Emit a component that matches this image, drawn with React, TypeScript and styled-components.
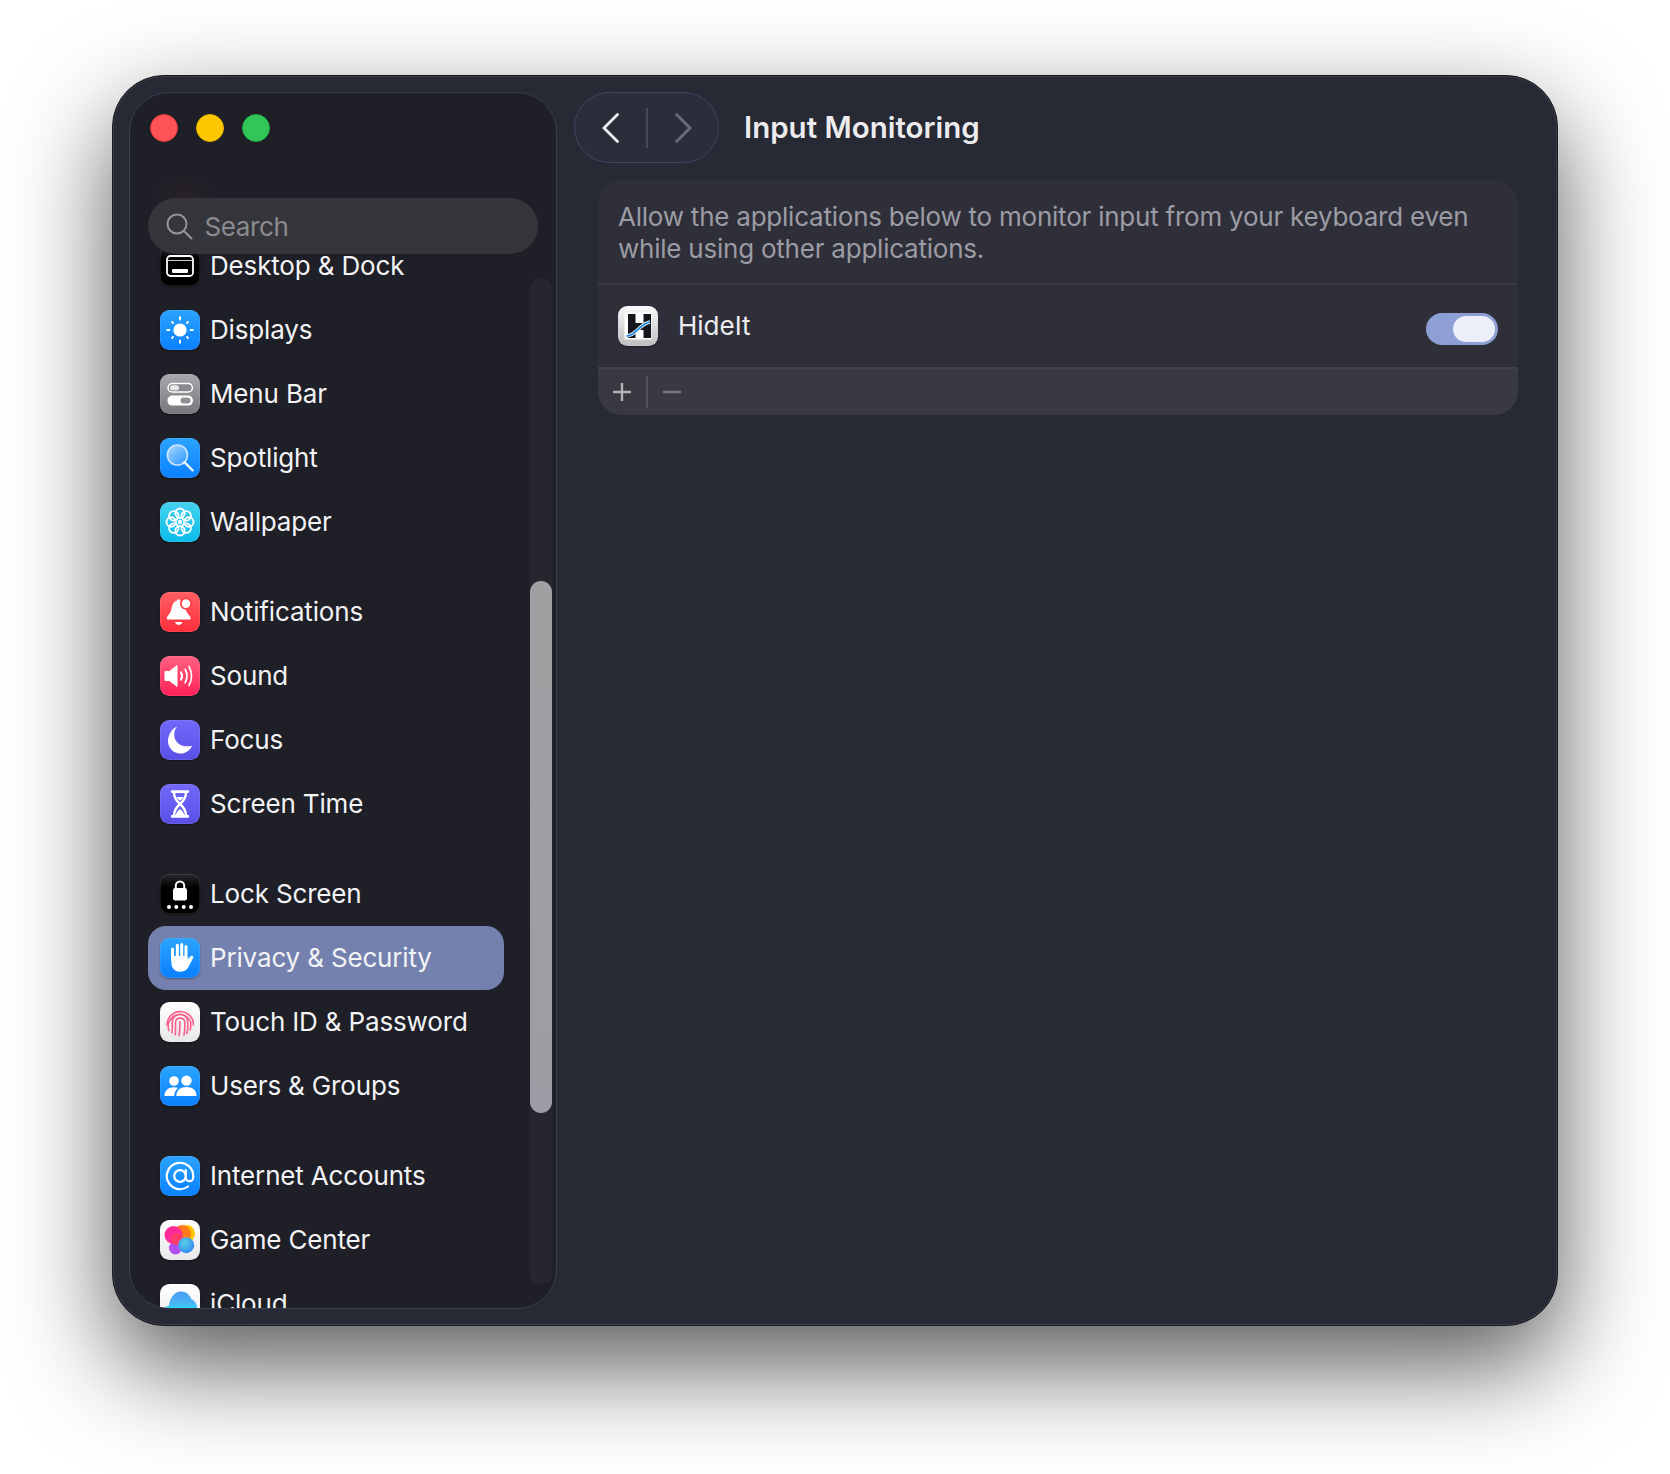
import React from "react";
import styled, { createGlobalStyle } from "styled-components";

const GlobalStyle = createGlobalStyle`
  html, body {
    margin: 0;
    padding: 0;
    background: #fff;
    font-family: "Inter", "Liberation Sans", sans-serif;
    -webkit-font-smoothing: antialiased;
  }
`;

const Page = styled.div`
  width: 1670px;
  height: 1474px;
  padding: 75px 0 0 112px;
  box-sizing: border-box;
  overflow: hidden;
`;

const Window = styled.div`
  box-sizing: border-box;
  width: 1446px;
  height: 1251px;
  display: flex;
  padding: 16px 39px 16px 16px;
  border: 1px solid #17181e;
  border-radius: 52px;
  background: #272934;
  box-shadow: inset 0 0 0 1px rgba(255, 255, 255, 0.1),
    0 40px 100px rgba(0, 0, 0, 0.65);
`;

const Sidebar = styled.aside`
  position: relative;
  box-sizing: border-box;
  flex: none;
  width: 428px;
  height: 1217px;
  border: 1.5px solid #3a3c50;
  border-radius: 40px;
  background: #1e1f27;
  overflow: hidden;
`;

const TrafficLights = styled.div`
  display: flex;
  gap: 18px;
  padding: 21px 0 0 20px;
`;

const Light = styled.span<{ $color: string; $edge: string }>`
  box-sizing: border-box;
  width: 28px;
  height: 28px;
  border-radius: 50%;
  background: ${(p) => p.$color};
  border: 1px solid ${(p) => p.$edge};
`;

const Glow = styled.div`
  position: absolute;
  left: 24px;
  top: 88px;
  width: 60px;
  height: 30px;
  border-radius: 50%;
  background: rgba(255, 70, 90, 0.05);
  filter: blur(12px);
`;

const SearchBox = styled.div`
  position: relative;
  z-index: 2;
  display: flex;
  align-items: center;
  gap: 12px;
  width: 390px;
  height: 56px;
  margin: 56px 0 0 17.5px;
  padding-left: 18px;
  box-sizing: border-box;
  border-radius: 28px;
  background: #35363b;
  color: #8b8b8f;
  font-size: 26px;
  letter-spacing: -0.4px;
  svg {
    flex: none;
  }
`;

const List = styled.div`
  margin: -20px 0 0 17.5px;
  width: 356px;
`;

const Group = styled.div`
  margin-bottom: 26px;
`;

const Row = styled.div<{ $selected?: boolean }>`
  display: flex;
  align-items: center;
  gap: 10.5px;
  height: 64px;
  padding-left: 12px;
  border-radius: 18px;
  background: ${(p) => (p.$selected ? "#7481ae" : "transparent")};
  color: #f3f3f5;
  font-size: 26px;
  letter-spacing: -0.16px;
  white-space: nowrap;
`;

const RowLabel = styled.span`
  padding-bottom: 2px;
`;

const AppIcon = styled.span<{ $bg: string }>`
  flex: none;
  width: 40px;
  height: 40px;
  border-radius: 9.5px;
  background: ${(p) => p.$bg};
  box-shadow: inset 0 0 0 0.5px rgba(255, 255, 255, 0.18),
    0 1px 2px rgba(0, 0, 0, 0.35);
  overflow: hidden;
  svg {
    display: block;
  }
`;

const ScrollTrack = styled.div`
  position: absolute;
  z-index: 1;
  left: 400px;
  top: 185px;
  width: 22px;
  height: 1007px;
  border-radius: 11px;
  background: #26272e;
`;

const ScrollThumb = styled.div`
  position: absolute;
  left: 0;
  top: 303px;
  width: 100%;
  height: 532px;
  border-radius: 11px;
  background: linear-gradient(#a0a0a2, #9c9da4);
`;

const Main = styled.main`
  flex: 1;
  min-width: 0;
  padding-left: 17px;
`;

const Header = styled.header`
  display: flex;
  align-items: center;
  gap: 25px;
  height: 71px;
`;

const NavPill = styled.div`
  box-sizing: border-box;
  display: flex;
  align-items: center;
  justify-content: space-between;
  width: 145px;
  height: 71px;
  padding: 0 26px 0 27px;
  border: 1.5px solid #3f4563;
  border-radius: 36px;
  background: #2b2d3b;
`;

const NavDivider = styled.span`
  width: 1.5px;
  height: 40px;
  background: #474954;
`;

const Title = styled.h1`
  margin: 0;
  padding-bottom: 2px;
  color: #ececee;
  font-size: 29.5px;
  font-weight: 600;
`;

const Card = styled.section`
  margin: 17px 0 0 24px;
  border-radius: 24px;
  background: #2f2f3a;
  overflow: hidden;
`;

const Description = styled.p`
  box-sizing: border-box;
  height: 105px;
  margin: 0;
  padding: 21px 20px 0;
  border-bottom: 2px solid #3a3a45;
  color: #9c9ca4;
  font-size: 26px;
  letter-spacing: -0.23px;
  line-height: 32px;
`;

const AppRow = styled.div`
  display: flex;
  align-items: center;
  gap: 20px;
  height: 82px;
  padding: 0 20px;
  color: #ededf0;
  font-size: 26px;
`;

const AppName = styled.span`
  flex: 1;
  padding-bottom: 2px;
`;

const Toggle = styled.span`
  display: flex;
  align-items: center;
  justify-content: flex-end;
  box-sizing: border-box;
  width: 72px;
  height: 32px;
  margin-top: 6px;
  padding-right: 3px;
  border-radius: 16px;
  background: #8d9fd4;
`;

const Knob = styled.span`
  width: 42px;
  height: 26px;
  border-radius: 13px;
  background: #eceff9;
`;

const Footer = styled.div`
  display: flex;
  align-items: center;
  height: 48px;
  padding-left: 15px;
  border-top: 2px solid #41414b;
  box-sizing: border-box;
  background: #393941;
`;

const FooterDivider = styled.span`
  width: 1.5px;
  height: 32px;
  margin: 0 15px;
  background: #52525a;
`;

const Glyph = ({ children }: { children: React.ReactNode }) => (
  <svg width="40" height="40" viewBox="0 0 40 40">
    {children}
  </svg>
);

const DesktopGlyph = () => (
  <Glyph>
    <rect x="7" y="10" width="26" height="20" rx="3.5" fill="none" stroke="#fff" strokeWidth="1.8" />
    <path d="M7.5 14.5h25" stroke="#fff" strokeWidth="0.8" />
    <rect x="12" y="23" width="16" height="4" rx="1" fill="#fff" />
  </Glyph>
);

const DisplaysGlyph = () => (
  <Glyph>
    <circle cx="20" cy="20" r="6.6" fill="#fff" />
    {[0, 45, 90, 135, 180, 225, 270, 315].map((a) => (
      <rect
        key={a}
        x="19"
        y={a % 90 === 0 ? 6.2 : 7.8}
        width="2"
        height={a % 90 === 0 ? 4.2 : 3.2}
        rx="1"
        fill="#fff"
        transform={`rotate(${a} 20 20)`}
      />
    ))}
  </Glyph>
);

const MenuBarGlyph = () => (
  <Glyph>
    <rect x="8" y="9.4" width="24.4" height="8.6" rx="4.3" fill="#8a8a8e" stroke="#fff" strokeWidth="1.5" />
    <rect x="10" y="11.2" width="9" height="5" rx="2.5" fill="#e9e9ec" />
    <rect x="7.4" y="21.6" width="25.6" height="10" rx="5" fill="#fff" />
    <rect x="20.5" y="23.6" width="10" height="6" rx="3" fill="#8f8f94" />
  </Glyph>
);

const SpotlightGlyph = () => (
  <Glyph>
    <defs>
      <linearGradient id="lens" x1="0" y1="0" x2="1" y2="1">
        <stop offset="0" stopColor="#cfe6ff" stopOpacity="0.85" />
        <stop offset="1" stopColor="#7fbcff" stopOpacity="0.25" />
      </linearGradient>
    </defs>
    <circle cx="17.4" cy="17" r="10" fill="url(#lens)" stroke="#cfe5ff" strokeWidth="1.6" />
    <path d="M24.6 24.4 32.6 32.4" stroke="#eef6ff" strokeWidth="2.3" strokeLinecap="round" />
  </Glyph>
);

const WallpaperGlyph = () => (
  <Glyph>
    {[0, 45, 90, 135, 180, 225, 270, 315].map((a) => (
      <circle key={a} cx="20" cy="11.2" r="4.7" fill="none" stroke="#fff" strokeWidth="1.9" transform={`rotate(${a} 20 20)`} />
    ))}
    <circle cx="20" cy="20" r="2.2" fill="#fff" />
  </Glyph>
);

const NotificationsGlyph = () => (
  <Glyph>
    <path d="M18.600 7.200c.9 0 1.500.6 1.600 1.400 2 .4 3.300 1.500 4.300 3.600.9 3.400 1.100 6.600 3.200 9.400.8 1.100 3 3.200 3 4.600 0 .8-.7 1.300-1.600 1.300H8.300c-.9 0-1.500-.5-1.500-1.300 0-1.400 2-3.500 2.800-4.600 2.800-3.700 1.400-11 7.400-13 .1-.8.7-1.400 1.600-1.400Z" fill="#fff" />
    <path d="M15 30h7.400c-.4 1.800-2 2.900-3.700 2.900S15.400 31.800 15 30Z" fill="#fff" />
    <circle cx="26" cy="11.600" r="5.200" fill="#fff" stroke="#ff4248" strokeWidth="1.800" />
  </Glyph>
);

const SoundGlyph = () => (
  <Glyph>
    <path d="M5 15.500h4.400L17 9.600v20.800l-7.600-5.900H5Z" fill="#fff" stroke="#fff" strokeLinejoin="round" />
    <g fill="none" stroke="#fff" strokeLinecap="round">
      <path d="M21 16.500c1.400 2.300 1.400 4.700 0 7" strokeWidth="2.200" />
      <path d="M25.200 13.400c2.200 4.200 2.200 9 0 13.200" strokeWidth="1.800" />
      <path d="M29 10.500c3.200 6 3.200 13 0 19" strokeWidth="1.600" />
    </g>
  </Glyph>
);

const FocusGlyph = () => (
  <Glyph>
    <path d="M17.200 6.500C13 11 13.200 18.600 17.800 23c3.500 3.300 8.300 4.100 14.200 2.700-1.800 4.600-6.400 7.800-11.600 7.800C13.700 33.500 8 27.900 8 21.200c0-6.500 4-12.700 9.200-14.700Z" fill="#fff" />
  </Glyph>
);

const ScreenTimeGlyph = () => (
  <Glyph>
    <g fill="none" stroke="#fff" strokeLinecap="round">
      <path d="M12.200 7.600h15.600M12.200 32.400h15.600" strokeWidth="2.800" />
      <path d="M14 8c0 6 2.500 9 6 12 3.500 3 6 6 6 12M26 8c0 6-2.500 9-6 12-3.500 3-6 6-6 12" strokeWidth="2.400" />
    </g>
    <path d="M15.800 31c.4-2.800 2.300-4.600 4.200-6 1.900 1.400 3.800 3.200 4.200 6ZM16.500 13h7c-.8 1.500-2 2.600-3.500 3.800-1.500-1.200-2.700-2.300-3.500-3.800Z" fill="#fff" />
  </Glyph>
);

const LockGlyph = () => (
  <Glyph>
    <path d="M15.800 15v-3.400a4.200 4.200 0 0 1 8.400 0V15" fill="none" stroke="#fff" strokeWidth="2" />
    <rect x="13" y="14" width="14" height="12.500" rx="2.200" fill="#fff" />
    {[9, 16.3, 23.7, 31].map((x) => (
      <circle key={x} cx={x} cy="33" r="2" fill="#fff" />
    ))}
  </Glyph>
);

const PrivacyGlyph = () => (
  <Glyph>
    <g stroke="#fff" strokeWidth="3" strokeLinecap="round">
      <path d="M12.500 11v11M17.300 7.200v13M21.700 6.500v13.500M26 8.500v13" />
    </g>
    <path d="M11 18h16.500v4c1.200-2 2.800-4 4-4.200 1.500-.2 2.200.9 1.600 2.100-1.300 2.700-2.800 5.200-4.200 8.100-1.500 3.200-4 5.700-8.500 5.700-5 0-8.900-3-8.900-8.500Z" fill="#fff" />
  </Glyph>
);

const TouchIdGlyph = () => (
  <Glyph>
    <g fill="none" stroke="#fb5f87" strokeWidth="1.600" strokeLinecap="round">
      <path d="M7 23A13.300 13.300 0 0 1 33.300 20v3" />
      <path d="M9 28.500A10.800 10.800 0 1 1 30.800 20c0 3 0 6-.6 8" />
      <path d="M12 30.800c.5-3 .3-7 .3-10.800a7.800 7.800 0 0 1 15.600 0c0 4 0 8-1 11.500" />
      <path d="M15.300 32.800c.4-4 .2-8.800.2-12.800a4.800 4.800 0 0 1 9.400 0c0 4.500 0 9-1 13" />
      <path d="M19 33.800c.8-4.300.9-9 .9-14" />
    </g>
  </Glyph>
);

const UsersGlyph = () => (
  <Glyph>
    <circle cx="14" cy="15" r="4.800" fill="#fff" />
    <circle cx="26.500" cy="14.600" r="5.200" fill="#fff" />
    <path d="M4.500 30c0-5.500 4-8.800 9.500-8.800 1.500 0 2.900.3 4.100.8-2.400 1.900-3.800 4.600-3.800 8Z" fill="#fff" />
    <path d="M16.300 30c0-5.700 4.300-8.900 10.200-8.900S36.500 24.300 36.500 30Z" fill="#fff" />
  </Glyph>
);

const InternetGlyph = () => (
  <svg width="40" height="40" viewBox="0 0 40 40" fill="none" stroke="#fff" strokeWidth="2.200" strokeLinecap="round" strokeLinejoin="round">
    <circle cx="20" cy="20" r="5.800" />
    <path d="M25.800 14.200v7.300a3.700 3.700 0 0 0 7.400 0v-1.500a13.200 13.200 0 1 0-5.200 10.500" />
  </svg>
);

const GameCenterGlyph = () => (
  <Glyph>
    <defs>
      <filter id="soft"><feGaussianBlur stdDeviation="0.5" /></filter>
      <radialGradient id="gcBlue" cx="0.4" cy="0.35" r="0.8">
        <stop offset="0" stopColor="#58d0e6" />
        <stop offset="1" stopColor="#2f7df0" />
      </radialGradient>
    </defs>
    <g filter="url(#soft)">
      <circle cx="15.500" cy="28" r="6.500" fill="#b04ff0" />
      <circle cx="26.500" cy="13.500" r="8.500" fill="#ffc400" />
      <circle cx="22" cy="14" r="9" fill="#ff7a1e" />
      <circle cx="13.500" cy="15" r="9" fill="#ff2a9a" />
      <circle cx="17" cy="19" r="6" fill="#ff3a6a" />
    </g>
    <circle cx="26.200" cy="25.200" r="8" fill="url(#gcBlue)" />
  </Glyph>
);

const CloudGlyph = () => (
  <Glyph>
    <defs>
      <linearGradient id="cloud" gradientUnits="userSpaceOnUse" x1="0" y1="8" x2="0" y2="25">
        <stop offset="0" stopColor="#4a9df5" />
        <stop offset="0.7" stopColor="#4ab6f5" />
        <stop offset="1" stopColor="#22d8f6" />
      </linearGradient>
    </defs>
    <path d="M3 30c0-4.500 2-7.800 6-8.600C9.800 13.500 15 7.500 21 7.500c4.800 0 8.800 3 10.300 7.800 3.700 1.200 5.700 4.700 5.700 9V34H3Z" fill="url(#cloud)" />
  </Glyph>
);

const HideItGlyph = () => (
  <Glyph>
    <rect x="6.500" y="6.500" width="27" height="27" rx="1" fill="#fff" />
    <path d="M10 8h7.500v9h8V8H33v24h-7.500v-8h-8v8H10Z" fill="#15171c" />
    <path d="M8.500 30c5.500-.5 8.500-3.500 11.500-6.500 3.500-3.500 7-6.500 12-7.500" fill="none" stroke="#fff" strokeWidth="3.400" />
    <path d="M8.500 30c5.500-.5 8.500-3.500 11.500-6.500 3.500-3.500 7-6.500 12-7.500" fill="none" stroke="#2b8fe0" strokeWidth="1.800" />
  </Glyph>
);

const blue = "linear-gradient(#2ba4ff, #0a80ff)";
const purple = "linear-gradient(#7268fb, #5a50e6)";
const black = "linear-gradient(#2a2a2c, #000 35%)";
const white = "linear-gradient(#ffffff, #e8e8ea)";

type Item = { label: string; bg: string; glyph: React.ReactNode; selected?: boolean };

const groups: Item[][] = [
  [
    { label: "Desktop & Dock", bg: black, glyph: <DesktopGlyph /> },
    { label: "Displays", bg: blue, glyph: <DisplaysGlyph /> },
    { label: "Menu Bar", bg: "linear-gradient(#a8a8ac, #77777c)", glyph: <MenuBarGlyph /> },
    { label: "Spotlight", bg: blue, glyph: <SpotlightGlyph /> },
    { label: "Wallpaper", bg: "linear-gradient(#48d2ee, #07bcea)", glyph: <WallpaperGlyph /> },
  ],
  [
    { label: "Notifications", bg: "linear-gradient(#ff5f63, #ff2f3b)", glyph: <NotificationsGlyph /> },
    { label: "Sound", bg: "linear-gradient(#ff6180, #ff2256)", glyph: <SoundGlyph /> },
    { label: "Focus", bg: purple, glyph: <FocusGlyph /> },
    { label: "Screen Time", bg: purple, glyph: <ScreenTimeGlyph /> },
  ],
  [
    { label: "Lock Screen", bg: black, glyph: <LockGlyph /> },
    { label: "Privacy & Security", bg: blue, glyph: <PrivacyGlyph />, selected: true },
    { label: "Touch ID & Password", bg: white, glyph: <TouchIdGlyph /> },
    { label: "Users & Groups", bg: blue, glyph: <UsersGlyph /> },
  ],
  [
    { label: "Internet Accounts", bg: blue, glyph: <InternetGlyph /> },
    { label: "Game Center", bg: white, glyph: <GameCenterGlyph /> },
    { label: "iCloud", bg: white, glyph: <CloudGlyph /> },
  ],
];

const App = () => {
  return (
    <Page>
      <GlobalStyle />
      <Window>
        <Sidebar>
          <Glow />
          <TrafficLights>
            <Light $color="#ff5257" $edge="#e5383f" />
            <Light $color="#fdc800" $edge="#e4ad00" />
            <Light $color="#32c758" $edge="#1fae42" />
          </TrafficLights>
          <SearchBox>
            <svg width="27" height="27" viewBox="0 0 27 27" fill="none" stroke="#96969a" strokeWidth="2" strokeLinecap="round">
              <circle cx="11" cy="11" r="9.500" />
              <path d="M18 18 25.500 25.500" />
            </svg>
            Search
          </SearchBox>
          <List>
            {groups.map((items) => (
              <Group key={items[0].label}>
                {items.map((item) => (
                  <Row key={item.label} $selected={item.selected}>
                    <AppIcon $bg={item.bg}>{item.glyph}</AppIcon>
                    <RowLabel>{item.label}</RowLabel>
                  </Row>
                ))}
              </Group>
            ))}
          </List>
          <ScrollTrack>
            <ScrollThumb />
          </ScrollTrack>
        </Sidebar>
        <Main>
          <Header>
            <NavPill>
              <svg width="17" height="30" viewBox="0 0 17 30" fill="none" stroke="#f0f0f2" strokeWidth="2.800" strokeLinecap="round" strokeLinejoin="round">
                <path d="M15.500 1.500 2 15l13.500 13.500" />
              </svg>
              <NavDivider />
              <svg width="17" height="30" viewBox="0 0 17 30" fill="none" stroke="#6c6e77" strokeWidth="2.800" strokeLinecap="round" strokeLinejoin="round">
                <path d="M1.500 1.500 15 15 1.500 28.500" />
              </svg>
            </NavPill>
            <Title>Input Monitoring</Title>
          </Header>
          <Card>
            <Description>
              Allow the applications below to monitor input from your keyboard even while using other applications.
            </Description>
            <AppRow>
              <AppIcon $bg="linear-gradient(#fafafa, #bdbdbf)">
                <HideItGlyph />
              </AppIcon>
              <AppName>HideIt</AppName>
              <Toggle>
                <Knob />
              </Toggle>
            </AppRow>
            <Footer>
              <svg width="18" height="18" viewBox="0 0 18 18" stroke="#b4b4b8" strokeWidth="2.400">
                <path d="M9 0v18M0 9h18" />
              </svg>
              <FooterDivider />
              <svg width="18" height="18" viewBox="0 0 18 18" stroke="#77777d" strokeWidth="2.400">
                <path d="M0 9h18" />
              </svg>
            </Footer>
          </Card>
        </Main>
      </Window>
    </Page>
  );
};

export default App;
